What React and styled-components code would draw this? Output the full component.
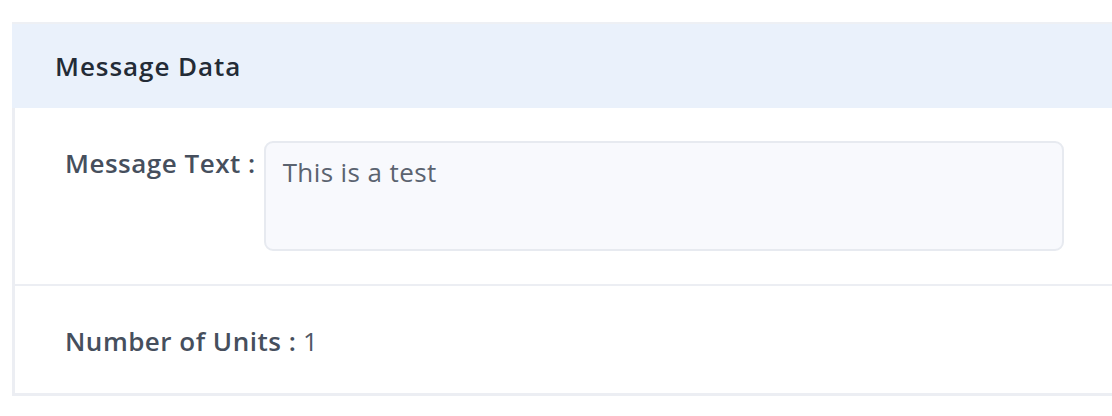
import * as React from 'react';
import styled, {createGlobalStyle} from 'styled-components';

const GlobalStyle = createGlobalStyle`
  html, body {
    margin: 0;
    padding: 0;
    background: #ffffff;
    font-family: 'Open Sans', 'Lato', sans-serif;
  }
`;

const Page = styled.div`
  padding: 22px 0 0 12px;
  width: 1112px;
  height: 416px;
  box-sizing: border-box;
  overflow: hidden;
`;

const Card = styled.div`
  width: 1120px;
  border-top: 2px solid #eef0f4;
  background: #ffffff;
`;

const CardHeader = styled.div`
  height: 84px;
  background: #eaf1fb;
  display: flex;
  align-items: center;
  padding-left: 43px;
  box-sizing: border-box;
`;

const Title = styled.h2`
  margin: 0;
  font-size: 26px;
  line-height: 30px;
  font-weight: 600;
  letter-spacing: 0.95px;
  color: #232b36;
`;

const CardBody = styled.div`
  border-left: 3px solid #eceef3;
  border-bottom: 3px solid #eceef3;
`;

const Row = styled.div`
  display: flex;
  align-items: flex-start;
  padding: ${(p) => p.$padding};
  border-bottom: ${(p) => (p.$divider ? '2px solid #eceef3' : 'none')};
`;

const Label = styled.span`
  font-size: 26px;
  font-weight: 600;
  letter-spacing: 0.5px;
  color: #464f5d;
  white-space: pre;
  line-height: 30px;
  margin-top: ${(p) => p.$offset || 0}px;
`;

const Value = styled.span`
  font-size: 26px;
  font-weight: 400;
  color: #4f5866;
  line-height: 30px;
`;

const TextBox = styled.div`
  margin-left: 8px;
  width: 800px;
  height: 110px;
  box-sizing: border-box;
  background: #f8f9fd;
  border: 2px solid #e7eaf0;
  border-radius: 9px;
  padding: 14px 17px;
  font-size: 26px;
  letter-spacing: 0.4px;
  line-height: 30px;
  color: #5b6370;
`;

export default function App() {
  return (
    <>
      <GlobalStyle />
      <Page>
        <Card>
          <CardHeader>
            <Title>Message Data</Title>
          </CardHeader>
          <CardBody>
            <Row $padding="33px 0 33px 50px" $divider>
              <Label $offset={7}>Message Text :</Label>
              <TextBox>This is a test</TextBox>
            </Row>
            <Row $padding="40px 0 37px 50px">
              <Label>Number of Units :</Label>
              <Value>&nbsp;1</Value>
            </Row>
          </CardBody>
        </Card>
      </Page>
    </>
  );
}
